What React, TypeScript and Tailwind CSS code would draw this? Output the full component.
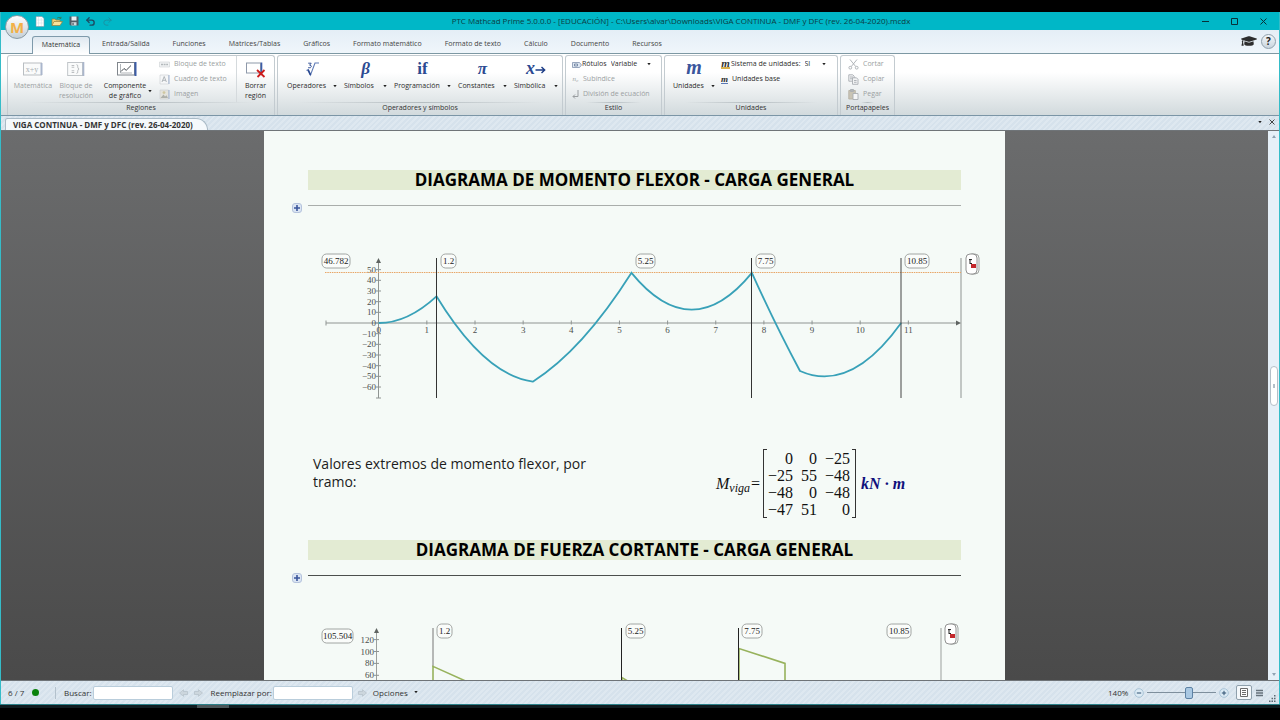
import { ReactNode } from "react";
import { FaGraduationCap } from "react-icons/fa";
import { LuRedo2, LuUndo2 } from "react-icons/lu";

const tabs = [
  "Entrada/Salida",
  "Funciones",
  "Matrices/Tablas",
  "Gráficos",
  "Formato matemático",
  "Formato de texto",
  "Cálculo",
  "Documento",
  "Recursos",
];

const operators = [
  { glyph: <RootIcon />, label: "Operadores", width: "w-[50px]", font: "" },
  { glyph: "β", label: "Símbolos", width: "w-[43px]", font: "font-['Liberation_Serif',serif] italic font-bold" },
  { glyph: "if", label: "Programación", width: "w-[57px]", font: "font-['Liberation_Serif',serif] font-bold" },
  { glyph: "π", label: "Constantes", width: "w-[49px]", font: "font-['Liberation_Serif',serif] italic font-bold" },
  { glyph: <SymbolicGlyph />, label: "Simbólica", width: "w-[44px]", font: "font-['Liberation_Serif',serif] italic font-bold" },
];

const matrix = [
  ["0", "0", "−25"],
  ["−25", "55", "−48"],
  ["−48", "0", "−48"],
  ["−47", "51", "0"],
];

type Point = [number, number];

// Bending moment: one parabola per load segment, as [control, end] in chart units
const momentSegments: [Point, Point][] = [
  [[0.6, 0], [1.2, 25]],
  [[2.2, -49], [3.2, -55]],
  [[4.225, -26], [5.25, 47]],
  [[6.5, -22], [7.75, 47]],
  [[8.25, -3], [8.75, -45]],
  [[9.8, -66], [10.85, 0]],
];

function Caret() {
  return (
    <svg viewBox="0 0 4 3" className="h-[3px] w-1 shrink-0" aria-hidden="true">
      <path d="M.3 0h3.4L2 2.3z" fill="#222" />
    </svg>
  );
}

function RootIcon() {
  return (
    <svg viewBox="0 0 16 16" className="mx-auto mt-px block size-4">
      <path d="m2.5 9.5 1.8-1 2.2 5.5L11 2h4" fill="none" stroke="#5f7bb5" strokeWidth="1.1" />
      <path d="m4 8.8 2.5 5" stroke="#2b4a91" strokeWidth="1.7" />
      <path d="M4.2 2.2h3L5.6 4.2q2 0 1.7 1.6-.4 1.5-3.2.9" fill="none" stroke="#2b4a91" strokeWidth=".9" />
    </svg>
  );
}

function SymbolicGlyph() {
  return (
    <span className="flex items-center justify-center">
      <span className="text-[18px]">x</span>
      <svg viewBox="0 0 11 8" className="mt-[2px] h-2 w-[11px]">
        <path d="M.5 4h9M6.5 1l3.2 3-3.2 3" fill="none" stroke="#1d3d86" strokeWidth="1.4" />
      </svg>
    </span>
  );
}

function RibbonGroup({ title, width, children }: { title: string; width: string; children: ReactNode }) {
  return (
    <section className={`flex flex-col rounded-t-[3px] border border-b-0 border-[#c3cbd0] ${width}`}>
      <div className="flex flex-1">{children}</div>
      <div className="mx-5 h-px bg-linear-to-r from-transparent via-[#b4bcc0] to-transparent" />
      <h2 className="pb-[2px] text-center leading-[10px] text-[#333]">{title}</h2>
    </section>
  );
}

function SmallCommand({ icon, label, muted = true }: { icon: ReactNode; label: string; muted?: boolean }) {
  return (
    <button className={`flex h-[15px] items-center gap-1 whitespace-nowrap ${muted ? "text-[#9b9fa2]" : "text-[#2c2c2c]"}`}>
      {icon}
      {label}
    </button>
  );
}

function FileIcon() {
  return (
    <svg viewBox="0 0 10 11" className="h-[11px] w-[10px]">
      <path d="M1 .5h6l2 2v8H1z" fill="#fff" stroke="#7b98a8" strokeWidth=".6" />
      <path d="M3.5 1v9M6.3 2v8M1.5 4h7M1.5 7h7" stroke="#c9dde4" strokeWidth=".5" />
    </svg>
  );
}

function FolderIcon() {
  return (
    <svg viewBox="0 0 12 11" className="h-[11px] w-3">
      <path d="M1 9.5V3h3l1 1h4v2" fill="#efd27a" stroke="#93803c" strokeWidth=".7" />
      <path d="M1 9.5 3 5.5h8.5L9 9.5z" fill="#f8e39a" stroke="#93803c" strokeWidth=".7" />
      <path d="M6 2.2Q8 .5 9.8 2M10 .8v1.6H8.5" fill="none" stroke="#3c6d3c" strokeWidth=".7" />
    </svg>
  );
}

function SaveIcon() {
  return (
    <svg viewBox="0 0 10 10" className="size-[10px]">
      <path d="M.5.5h9v9h-8l-1-1z" fill="#4f5d66" />
      <path d="M2.5.5h5v4h-5z" fill="#e9f1f3" />
      <path d="M2.5 6.2h5v3.3h-5z" fill="#cfdadd" />
      <path d="M3.4 6.8h1.3v2.2H3.4z" fill="#4f5d66" />
    </svg>
  );
}

function TextFrameIcon({ text }: { text: string }) {
  return (
    <svg viewBox="0 0 20 14" className="h-[14px] w-5">
      <rect x=".5" y="1" width="18" height="12" fill="#fafbfb" stroke="#b9bec2" />
      <path d="M18.5 1v12" stroke="#aab6cc" strokeWidth="2" />
      <text x="9" y="10" textAnchor="middle" fontSize="8" fill="#a9aeb1" fontFamily="Liberation Serif, serif">
        {text}
      </text>
    </svg>
  );
}

function SolveBlockIcon() {
  return (
    <svg viewBox="0 0 20 16" className="h-[14px] w-5">
      <rect x=".5" y=".5" width="17" height="15" fill="#fafbfb" stroke="#b9bec2" />
      <path d="M18.5 0v16" stroke="#aab6cc" strokeWidth="2" />
      <path d="M5 4h3M5 6h3M5 10h3M5 12h3M10.5 3q2 0 1.5 2.5-.2 2 1.5 2.5-1.7.5-1.5 2.5.5 2.5-1.5 2.5" fill="none" stroke="#a9aeb1" strokeWidth=".9" />
    </svg>
  );
}

function ChartIcon() {
  return (
    <svg viewBox="0 0 20 14" className="h-[14px] w-5">
      <rect x=".5" y=".5" width="17" height="12.5" fill="#fff" stroke="#80868c" />
      <path d="M18.5 0v14" stroke="#3c5da8" strokeWidth="2" />
      <path d="M3.5 2v9H15" fill="none" stroke="#8d949a" strokeWidth=".7" />
      <path d="m4 9.5 3-3 2.2 1.8L14 3.5" fill="none" stroke="#444b52" />
    </svg>
  );
}

function DeleteRegionIcon() {
  return (
    <svg viewBox="0 0 20 16" className="h-4 w-5">
      <rect x=".5" y="1" width="14" height="10" fill="#fff" stroke="#8e99aa" />
      <path d="M15.5.5v11" stroke="#3c5da8" strokeWidth="1.6" />
      <path d="m11 8 7.5 7M18.5 8l-7 7" stroke="#cc1c1c" strokeWidth="1.8" />
    </svg>
  );
}

function TinyFrameIcon({ kind }: { kind: "text" | "box" | "image" }) {
  return (
    <svg viewBox="0 0 11 11" className="size-[11px]">
      {kind === "text" && (
        <>
          <path d="M.5 3h10v5H.5z" fill="#f1f3f4" stroke="#ccd0d3" strokeWidth=".6" />
          <path d="M2 5.5h7" stroke="#b3b8bb" strokeWidth="1.4" strokeDasharray="2 .6" />
        </>
      )}
      {kind === "box" && (
        <>
          <path d="M1 1h8.5v9H1z" fill="#f6f7f8" stroke="#c9ced2" strokeWidth=".6" />
          <path d="M10 1v9" stroke="#9fb0cf" />
          <path d="m3 8 2.2-5.5L7.4 8M3.8 6.3h2.8" fill="none" stroke="#a0a6aa" strokeWidth=".8" />
        </>
      )}
      {kind === "image" && (
        <>
          <path d="M1 1h8.5v9H1z" fill="#e4e3dc" stroke="#c9ced2" strokeWidth=".6" />
          <path d="M10 1v9" stroke="#9fb0cf" />
          <path d="m1.5 9 3-3.5L6 7.5l1.5-1.3L9 9z" fill="#aeb0aa" />
          <circle cx="5" cy="3.6" r="1.4" fill="#cfc6a0" />
        </>
      )}
    </svg>
  );
}

function ClipboardIcon({ kind }: { kind: "cut" | "copy" | "paste" }) {
  return (
    <svg viewBox="0 0 11 11" className="size-[11px]" fill="none" stroke="#a9aeb2" strokeWidth=".9">
      {kind === "cut" && (
        <>
          <path d="m2 .5 5.7 7M9 .5l-5.7 7" />
          <circle cx="2.3" cy="8.7" r="1.4" />
          <circle cx="8.7" cy="8.7" r="1.4" />
        </>
      )}
      {kind === "copy" && (
        <>
          <path d="M.8.8h4l1.4 1.4v5H.8zM2 3h3M2 4.8h3" fill="#f2f3f4" />
          <path d="M4.5 3.8h4L10 5.3v5H4.5zM6 6.5h2.6M6 8.3h2.6" fill="#f2f3f4" />
        </>
      )}
      {kind === "paste" && (
        <>
          <path d="M.8 1.5h6.5V10H.8z" fill="#c9c4b4" stroke="#b5b1a4" />
          <path d="M2.5.5h3v2h-3z" fill="#b2b5b8" />
          <path d="M5 4.5h5v6H5z" fill="#f5f6f7" />
        </>
      )}
    </svg>
  );
}

function ArrowIcon({ back = false }: { back?: boolean }) {
  return (
    <svg viewBox="0 0 9 8" className={`h-2 w-[9px] shrink-0 ${back ? "rotate-180" : ""}`}>
      <path d="M.5 2.5h4V.7L8.5 4 4.5 7.3V5.5h-4z" fill="#ccd6dd" stroke="#aebac2" strokeWidth=".6" />
    </svg>
  );
}

function ZoomButton({ label, plus = false }: { label: string; plus?: boolean }) {
  return (
    <button aria-label={label}>
      <svg viewBox="0 0 10 10" className="size-[10px]">
        <circle cx="5" cy="5" r="4.3" fill="#dcebf5" stroke="#93b4cc" strokeWidth=".7" />
        <path d={plus ? "M2.8 5h4.4M5 2.8v4.4" : "M2.8 5h4.4"} stroke="#2f5170" />
      </svg>
    </button>
  );
}

function Tag({ x, y, text, width }: { x: number; y: number; text: string; width: number }) {
  return (
    <g>
      <rect x={x} y={y} width={width} height="14" rx="4.5" fill="#fafcfa" stroke="#8b8f8d" strokeWidth=".8" />
      <text x={x + width / 2} y={y + 10} textAnchor="middle" fontSize="9" fill="#222">
        {text}
      </text>
    </g>
  );
}

function PlaceholderTag({ x }: { x: number }) {
  return (
    <g>
      <rect x={x + 2} y="4" width="11" height="20" rx="4" fill="#f8faf8" stroke="#8b8f8d" strokeWidth=".8" />
      <rect x={x} y="4" width="11" height="20" rx="4" fill="#fff" stroke="#777" strokeWidth=".8" />
      <path d="M1 0v5M0 .6h3M1 4.5h2" transform={`translate(${x + 3} 9)`} fill="none" stroke="#222" />
      <rect x={x + 5} y="14" width="5" height="4" fill="#c3272b" />
    </g>
  );
}

function MomentChart() {
  const px = (v: number) => 114.7 + v * 48.15;
  const py = (v: number) => 73 - v * 1.067;
  const curve = momentSegments
    .map(([c, p]) => `Q${px(c[0])} ${py(c[1])} ${px(p[0])} ${py(p[1])}`)
    .join(" ");
  const yTicks = [50, 40, 30, 20, 10, 0, -10, -20, -30, -40, -50, -60];

  return (
    <svg viewBox="0 0 741 150" className="block w-full font-['Liberation_Serif',serif]" role="img" aria-label="Diagrama de momento flexor">
      <g stroke="#8f9492" strokeWidth="1">
        <path d="M62 73H694M62 70.5v5M114.5 12V148M112 148h5M697 8V148" />
        {yTicks.map((v) => (
          <path key={v} d={`M112 ${py(v)}h5`} />
        ))}
        {Array.from({ length: 11 }, (_, i) => (
          <path key={i} d={`M${px(i + 1)} 70.5v4`} />
        ))}
      </g>
      <path d="m112 13 2.5-5 2.5 5zM692 70.5l5 2.5-5 2.5z" fill="#5f6462" />
      <g fontSize="9" fill="#4a4e4c">
        {yTicks.map((v) => (
          <text key={v} x="112" y={py(v) + 3} textAnchor="end">
            {v < 0 ? `−${-v}` : v}
          </text>
        ))}
        {Array.from({ length: 12 }, (_, i) => (
          <text key={i} x={px(i)} y="83" textAnchor="middle">
            {i}
          </text>
        ))}
      </g>
      <path d="M61 22.5H697" stroke="#e8a566" strokeDasharray="1.5 .8" />
      <path d={`M114.7 73 ${curve}`} fill="none" stroke="#38a1b8" strokeWidth="1.8" />
      <path d="M172.5 8V148M487.5 8V148" stroke="#333" />
      <path d="M637 8V148" stroke="#444" />
      <Tag x={58} y={4} width={28} text="46.782" />
      <Tag x={177} y={4} width={15} text="1.2" />
      <Tag x={372} y={4} width={19} text="5.25" />
      <Tag x={492} y={4} width={19} text="7.75" />
      <Tag x={641} y={4} width={24} text="10.85" />
      <PlaceholderTag x={702} />
    </svg>
  );
}

function ShearChart() {
  const px = (v: number) => 112.5 + v * 46.65;
  const py = (v: number) => 91 - v * 0.595;

  return (
    <svg viewBox="0 0 741 64" className="block w-full font-['Liberation_Serif',serif]" role="img" aria-label="Diagrama de fuerza cortante">
      <path d="M112.5 12V64M677 8V64" stroke="#9b9f9d" />
      <path d="m110 13 2.5-5 2.5 5z" fill="#5f6462" />
      <g fontSize="9" fill="#4a4e4c">
        {[120, 100, 80, 60].map((v) => (
          <g key={v}>
            <path d={`M110 ${py(v)}h5`} stroke="#8f9492" />
            <text x="110" y={py(v) + 3} textAnchor="end">
              {v}
            </text>
          </g>
        ))}
      </g>
      <path d="M169 8V47" stroke="#777" />
      <path
        d={`M169 64V${py(75)}L${px(3.2)} ${py(5)}M358 64V${py(56)}L${px(6.5)} ${py(0)}M475 64V${py(105)}L521 ${py(80)}V64`}
        fill="none"
        stroke="#97b25c"
        strokeWidth="1.6"
      />
      <path d="M357.5 8V64M474.5 8V64" stroke="#222" />
      <Tag x={58} y={9} width={31} text="105.504" />
      <Tag x={173} y={4} width={15} text="1.2" />
      <Tag x={362} y={4} width={19} text="5.25" />
      <Tag x={478} y={4} width={20} text="7.75" />
      <Tag x={623} y={4} width={24} text="10.85" />
      <PlaceholderTag x={681} />
    </svg>
  );
}

function SectionHeading({ title, line }: { title: string; line: string }) {
  return (
    <>
      <h2 className="mx-11 bg-[#e3ebd3] text-center text-[17px] leading-5 font-bold text-black">{title}</h2>
      <div className="mt-[13px] mr-11 ml-7 flex gap-[6px]">
        <button
          aria-label="Contraer área"
          className="flex size-[10px] items-center justify-center rounded-[3px] border border-[#b5c3dc] bg-[#dbe5f3]"
        >
          <svg viewBox="0 0 6 6" className="size-[6px]">
            <path d="M0 3h6M3 0v6" stroke="#3a559b" strokeWidth="1.6" />
          </svg>
        </button>
        <hr className={`mt-[2px] flex-1 ${line}`} />
      </div>
    </>
  );
}

function TitleBar() {
  return (
    <header className="flex h-[18px] items-center bg-[#00b7c7] pr-3 pl-[34px]">
      <div className="flex w-[160px] items-center gap-[6px]">
        <button aria-label="Nuevo"><FileIcon /></button>
        <button aria-label="Abrir"><FolderIcon /></button>
        <button aria-label="Guardar"><SaveIcon /></button>
        <button aria-label="Deshacer"><LuUndo2 className="size-[11px] stroke-3 text-[#1d4b63]" /></button>
        <button aria-label="Rehacer"><LuRedo2 className="size-[11px] text-[#1b8fa0]" /></button>
      </div>
      <h1 className="flex-1 truncate text-center text-[8px] text-[#0c3b42]">
        PTC Mathcad Prime 5.0.0.0 - [EDUCACIÓN] - C:\Users\alvar\Downloads\VIGA CONTINUA - DMF y DFC (rev. 26-04-2020).mcdx
      </h1>
      <div className="flex w-[100px] justify-end gap-[22px] text-[#083138]">
        <button aria-label="Minimizar">
          <svg viewBox="0 0 7 7" className="size-[7px]"><path d="M0 3.5h7" stroke="currentColor" /></svg>
        </button>
        <button aria-label="Maximizar">
          <svg viewBox="0 0 7 7" className="size-[7px]"><path d="M.5.5h6v6h-6z" fill="none" stroke="currentColor" /></svg>
        </button>
        <button aria-label="Cerrar">
          <svg viewBox="0 0 7 7" className="size-[7px]"><path d="m.5.5 6 6M6.5.5l-6 6" stroke="currentColor" /></svg>
        </button>
      </div>
    </header>
  );
}

function TabStrip() {
  return (
    <nav className="flex h-6 items-end border-b border-[#7d98a3] bg-linear-to-b from-[#e4eef6] to-[#f0f6fb] pr-[3px] pl-[31px]">
      <button className="-mb-px h-[18px] w-[58px] rounded-t-[3px] border border-b-0 border-[#7f9aab] bg-linear-to-b from-[#dfe8f0] to-white text-[#333]">
        Matemática
      </button>
      {tabs.map((tab) => (
        <button key={tab} className="h-[18px] pr-[11px] pl-3 whitespace-nowrap text-[#444]">
          {tab}
        </button>
      ))}
      <div className="mb-1 ml-auto flex items-center gap-1">
        <FaGraduationCap className="size-4 text-[#2d2d2d]" />
        <button
          aria-label="Ayuda"
          className="size-[15px] rounded-full border border-[#8fa0ac] bg-linear-to-b from-[#f3f7fa] to-[#c9d5de] text-[10px] leading-[13px] font-bold text-[#222]"
        >
          ?
        </button>
      </div>
    </nav>
  );
}

function Ribbon() {
  return (
    <div className="flex h-[62px] gap-[2px] border-b border-[#7b95a6] bg-linear-to-b from-white from-30% to-[#d2dadd] pt-[1px] pl-[6px]">
      <RibbonGroup title="Regiones" width="w-[268px]">
        <div className="flex flex-1 pt-[6px]">
          <button className="flex w-[50px] flex-col items-center gap-[5px] leading-[10px] text-[#9b9fa2]">
            <TextFrameIcon text="x+y" />
            Matemática
          </button>
          <button className="flex w-9 flex-col items-center gap-[5px] leading-[10px] text-[#9b9fa2]">
            <SolveBlockIcon />
            Bloque de resolución
          </button>
          <button className="ml-[5px] flex w-[56px] flex-col items-center gap-[5px] leading-[10px] text-[#2c2c2c]">
            <ChartIcon />
            <span className="flex items-center">
              <span className="w-[46px]">Componente de gráfico</span>
              <Caret />
            </span>
          </button>
        </div>
        <div className="w-[77px] pt-[1px]">
          <SmallCommand icon={<TinyFrameIcon kind="text" />} label="Bloque de texto" />
          <SmallCommand icon={<TinyFrameIcon kind="box" />} label="Cuadro de texto" />
          <SmallCommand icon={<TinyFrameIcon kind="image" />} label="Imagen" />
        </div>
        <button className="flex w-[38px] flex-col items-center gap-[3px] border-l border-[#d5dadd] pt-[6px] leading-[10px] text-[#2c2c2c]">
          <DeleteRegionIcon />
          Borrar región
        </button>
      </RibbonGroup>

      <RibbonGroup title="Operadores y símbolos" width="w-[286px]">
        <div className="flex flex-1 gap-[7px] pl-[9px]">
          {operators.map((op) => (
            <button key={op.label} className={`flex flex-col pt-1 text-[#2c2c2c] ${op.width}`}>
              <span className={`h-[17px] w-full text-center text-[17px] leading-[17px] text-[#2b4a91] ${op.font}`}>
                {op.glyph}
              </span>
              <span className="mt-1 flex w-full items-center justify-between leading-[10px]">
                {op.label}
                <Caret />
              </span>
            </button>
          ))}
        </div>
      </RibbonGroup>

      <RibbonGroup title="Estilo" width="w-[97px]">
        <div className="flex-1 pt-[1px] pl-[6px]">
          <label className="flex h-[15px] items-center text-[#2c2c2c]">
            <svg viewBox="0 0 10 8" className="h-2 w-[10px]">
              <path d="M.5 1.5h7l2 2.5-2 2.5h-7z" fill="#dfe8f3" stroke="#8192ad" strokeWidth=".8" />
              <path d="M2.5 3v2h3V3z" fill="none" stroke="#5a6d8e" strokeWidth=".7" />
            </svg>
            Rótulos
            <select className="ml-1 w-8 appearance-none bg-transparent outline-none" defaultValue="Variable">
              <option>Variable</option>
            </select>
            <span className="ml-1"><Caret /></span>
          </label>
          <SmallCommand
            icon={<span className="w-[7px] font-['Liberation_Serif',serif] italic">n₀</span>}
            label="Subíndice"
          />
          <SmallCommand
            icon={
              <svg viewBox="0 0 7 9" className="h-[9px] w-[7px]">
                <path d="M6 0v6.5H1M3 4.5l-2 2 2 2" fill="none" stroke="#9a9ea1" />
              </svg>
            }
            label="División de ecuación"
          />
        </div>
      </RibbonGroup>

      <RibbonGroup title="Unidades" width="w-[174px]">
        <button className="ml-2 flex w-[42px] flex-col pt-1 text-[#2c2c2c]">
          <span className="h-[17px] w-full text-center font-['Liberation_Serif',serif] text-[20px] leading-[15px] font-bold text-[#3a569c] italic">
            m
          </span>
          <span className="mt-1 flex w-full items-center justify-between leading-[10px]">
            Unidades
            <Caret />
          </span>
        </button>
        <div className="ml-[6px] pt-[1px]">
          <label className="flex h-[15px] items-center whitespace-nowrap text-[#2c2c2c]">
            <span className="mr-px h-[9px] w-[9px] border-b-2 border-[#d9b24c] text-center font-['Liberation_Serif',serif] text-[11px] leading-[6px] font-bold text-[#333] italic">
              m
            </span>
            Sistema de unidades:
            <select className="ml-1 w-3 appearance-none bg-transparent outline-none" defaultValue="SI">
              <option>SI</option>
            </select>
            <span className="ml-[5px]"><Caret /></span>
          </label>
          <SmallCommand
            muted={false}
            icon={
              <span className="h-2 w-[7px] border-b border-[#5b79b5] text-center font-['Liberation_Serif',serif] text-[9px] leading-[6px] font-bold italic">
                m
              </span>
            }
            label="Unidades base"
          />
        </div>
      </RibbonGroup>

      <RibbonGroup title="Portapapeles" width="w-[55px]">
        <div className="pt-[1px] pl-[7px]">
          <SmallCommand icon={<ClipboardIcon kind="cut" />} label="Cortar" />
          <SmallCommand icon={<ClipboardIcon kind="copy" />} label="Copiar" />
          <SmallCommand icon={<ClipboardIcon kind="paste" />} label="Pegar" />
        </div>
      </RibbonGroup>
    </div>
  );
}

function DocumentTabs() {
  return (
    <div className="flex h-[15px] items-end border-b border-[#6f7478] bg-[repeating-linear-gradient(135deg,#d6e2ec_0_2px,#dee8f0_2px_4px)] pr-1 pl-1">
      <button className="h-3 rounded-tl-[3px] rounded-tr-[14px] border border-b-0 border-[#a9bac6] bg-[#f5f9fc] pr-[14px] pl-[7px] text-[8px] leading-[11px] font-bold whitespace-nowrap text-[#333]">
        VIGA CONTINUA - DMF y DFC (rev. 26-04-2020)
      </button>
      <div className="mb-[5px] ml-auto flex items-center gap-[7px]">
        <button aria-label="Lista de documentos" className="flex"><Caret /></button>
        <button aria-label="Cerrar documento">
          <svg viewBox="0 0 6 6" className="block size-[6px]"><path d="m.5.5 5 5M5.5.5l-5 5" stroke="#444" /></svg>
        </button>
      </div>
    </div>
  );
}

function Worksheet() {
  return (
    <article className="mx-auto w-full max-w-[741px] bg-[#f5faf7] pt-[39px]">
      <SectionHeading title="DIAGRAMA DE MOMENTO FLEXOR - CARGA GENERAL" line="border-[#a9adab]" />
      <div className="mt-[37px]">
        <MomentChart />
      </div>
      <div className="mt-[49px] flex h-[69px] items-center pl-[49px]">
        <p className="w-[290px] pb-[22px] text-[14px] leading-[18px] text-[#1c1c1c]">
          Valores extremos de momento flexor, por tramo:
        </p>
        <div className="ml-[113px] flex items-center font-['Liberation_Serif',serif] text-[16px] leading-[17px] text-[#111]">
          <span className="italic">
            M<sub className="text-[12px]">viga</sub>
          </span>
          <span className="mr-[3px] ml-px">=</span>
          <span className="h-[69px] w-1 border-y border-l border-[#333]" />
          <table className="text-right">
            <tbody>
              {matrix.map((row, i) => (
                <tr key={i}>
                  {row.map((cell, j) => (
                    <td key={j} className="p-0 pl-2 first:pl-px">
                      {cell}
                    </td>
                  ))}
                </tr>
              ))}
            </tbody>
          </table>
          <span className="ml-[2px] h-[69px] w-1 border-y border-r border-[#333]" />
          <span className="ml-[5px] font-bold text-[#10107c] italic">kN · m</span>
        </div>
      </div>
      <div className="mt-[22px]">
        <SectionHeading title="DIAGRAMA DE FUERZA CORTANTE - CARGA GENERAL" line="border-[#4b4f4d]" />
      </div>
      <div className="mt-[37px]">
        <ShearChart />
      </div>
    </article>
  );
}

function ScrollBar() {
  return (
    <div className="flex w-[11px] flex-col items-center bg-[#e6f0f8] py-1">
      <button aria-label="Subir">
        <svg viewBox="0 0 4 3" className="block h-[3px] w-1"><path d="M0 3h4L2 0z" fill="#8fa3b3" /></svg>
      </button>
      <div className="grow-46" />
      <div className="flex h-10 w-2 items-center justify-center rounded-full border border-[#b4bfc8] bg-white">
        <span className="h-1 w-[2px] bg-[#b4bfc8]" />
      </div>
      <div className="grow-54" />
      <button aria-label="Bajar">
        <svg viewBox="0 0 4 3" className="block h-[3px] w-1"><path d="M0 0h4L2 3z" fill="#8fa3b3" /></svg>
      </button>
    </div>
  );
}

function StatusBar() {
  return (
    <footer className="flex h-6 items-center border-t border-[#6f7478] bg-[repeating-linear-gradient(135deg,#d6e2ec_0_2px,#dee8f0_2px_4px)] pr-[3px] pl-[7px] text-[8px] text-[#333]">
      <span className="w-6">6 / 7</span>
      <span className="size-[7px] rounded-full bg-[#0a820c]" />
      <span className="ml-4 h-3 w-px bg-[#b3c1cc]" />
      <label className="ml-2 flex items-center gap-px">
        Buscar:
        <input className="h-[14px] w-20 rounded-[2px] border border-[#b9cddb] bg-white" />
      </label>
      <button aria-label="Anterior" className="ml-[6px]"><ArrowIcon back /></button>
      <button aria-label="Siguiente" className="ml-[6px]"><ArrowIcon /></button>
      <label className="ml-2 flex items-center gap-px">
        Reemplazar por:
        <input className="h-[14px] w-20 rounded-[2px] border border-[#b9cddb] bg-white" />
      </label>
      <button aria-label="Reemplazar" className="ml-[5px]"><ArrowIcon /></button>
      <button className="ml-[6px] flex items-center gap-[6px]">
        Opciones
        <Caret />
      </button>

      <span className="ml-auto w-[26px]">140%</span>
      <ZoomButton label="Alejar" />
      <input
        type="range"
        aria-label="Zoom"
        min={0}
        max={100}
        defaultValue={62}
        className="mx-[3px] h-3 w-[69px] appearance-none bg-[linear-gradient(#7e8f9c,#7e8f9c)] bg-[length:100%_1px] bg-center bg-no-repeat [&::-webkit-slider-thumb]:h-3 [&::-webkit-slider-thumb]:w-2 [&::-webkit-slider-thumb]:appearance-none [&::-webkit-slider-thumb]:rounded-[2px] [&::-webkit-slider-thumb]:border [&::-webkit-slider-thumb]:border-[#5d82a4] [&::-webkit-slider-thumb]:bg-[#a9c8e2]"
      />
      <ZoomButton label="Acercar" plus />
      <button aria-label="Vista de página" className="ml-[7px] flex h-[15px] w-4 items-center justify-center rounded-[2px] border border-[#8fa0ac] bg-[#f4f8fb]">
        <svg viewBox="0 0 8 9" className="h-[9px] w-2">
          <path d="M.5.5h7v8h-7zM2 2.5h4M2 4.5h4M2 6.5h4" fill="#fff" stroke="#6b6b6b" />
        </svg>
      </button>
      <button aria-label="Vista de borrador" className="ml-1 flex">
        <svg viewBox="0 0 7 8" className="h-2 w-[7px]"><path d="M0 1.5h7M0 4h7M0 6.5h7" stroke="#66727b" strokeWidth="1.5" /></svg>
      </button>
      <svg viewBox="0 0 7 7" className="mt-3 ml-[6px] size-[7px]" aria-hidden="true">
        <path d="M5 0h1.5v1.5H5zM5 2.7h1.5v1.5H5zM5 5.4h1.5v1.5H5zM2.5 2.7H4v1.5H2.5zM2.5 5.4H4v1.5H2.5zM0 5.4h1.5v1.5H0z" fill="#5b6770" />
      </svg>
    </footer>
  );
}

export default function App() {
  return (
    <div className="flex h-screen flex-col bg-black py-3 font-['Open_Sans','Noto_Sans',sans-serif] text-[7px]">
      <div className="relative flex min-h-0 flex-1 flex-col border-x border-[#35bcc8]">
        <TitleBar />
        <TabStrip />
        <button
          aria-label="Menú de Mathcad"
          className="absolute top-[3px] left-1 size-6 rounded-full border border-[#8a9aa3] bg-linear-to-b from-white to-[#c4cfd6] text-[15px] leading-5 font-bold text-[#f2b048]"
        >
          M
        </button>
        <Ribbon />
        <DocumentTabs />
        <main className="flex min-h-0 flex-1 overflow-hidden bg-linear-to-b from-[#6b6c6d] to-[#4a4a4a]">
          <div className="flex flex-1 overflow-hidden">
            <Worksheet />
          </div>
          <ScrollBar />
        </main>
        <StatusBar />
      </div>
      <div className="h-1 border-t border-[#2b8089] bg-[#101c20] pl-[197px]">
        <div className="h-[3px] w-8 bg-[#4a5558]" />
      </div>
    </div>
  );
}
